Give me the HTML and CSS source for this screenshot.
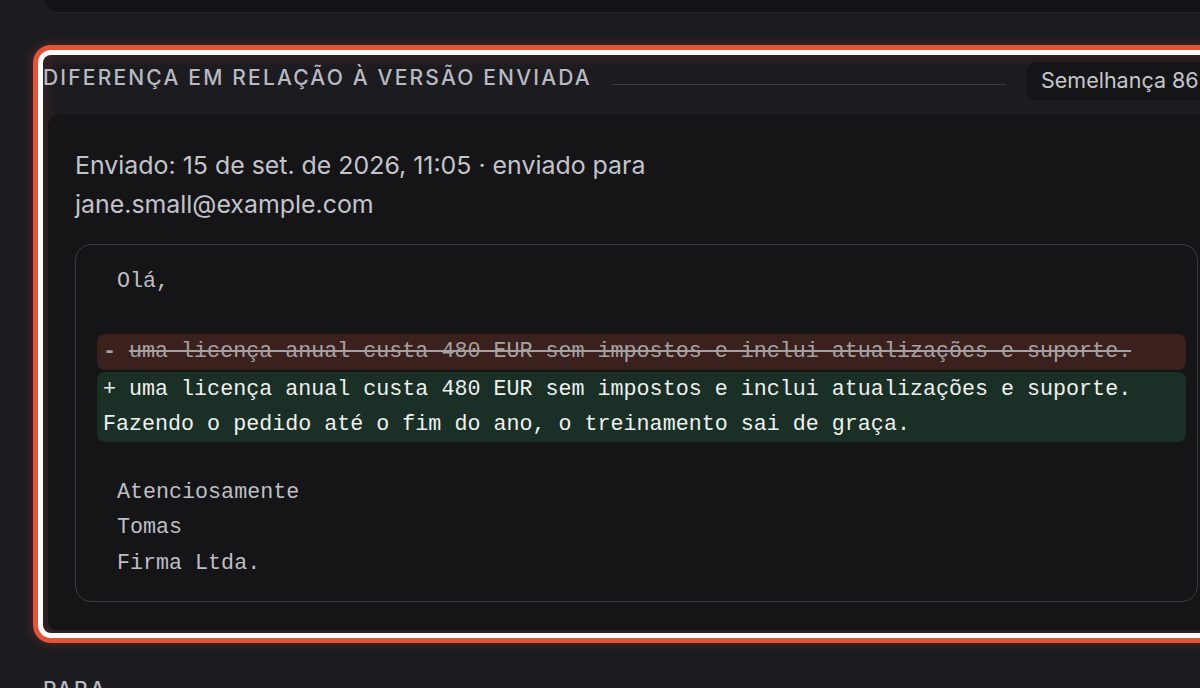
FILE: index.html
```html
<!DOCTYPE html>
<html lang="pt">
<head>
<meta charset="utf-8">
<title>Diferença</title>
<link rel="stylesheet" href="styles.css">
</head>
<body>
<div class="page">
  <div class="top-card"></div>
  <section class="diff-section">
    <header class="diff-head">
      <h2 class="diff-title">Diferença em relação à versão enviada</h2>
      <div class="rule"></div>
      <div class="badge">Semelhança 86%</div>
    </header>
    <div class="diff-card">
      <p class="meta">Enviado: 15 de set. de 2026, 11:05 · enviado para<br>jane.small@example.com</p>
      <div class="code">
        <div class="ln">Olá,</div>
        <div class="ln">&nbsp;</div>
        <div class="blk del"><span class="sign">-</span> <s>uma licença anual custa 480 EUR sem impostos e inclui atualizações e suporte.</s></div>
        <div class="blk ins">+ uma licença anual custa 480 EUR sem impostos e inclui atualizações e suporte.<br>Fazendo o pedido até o fim do ano, o treinamento sai de graça.</div>
        <div class="ln">&nbsp;</div>
        <div class="ln">Atenciosamente</div>
        <div class="ln">Tomas</div>
        <div class="ln">Firma Ltda.</div>
      </div>
    </div>
  </section>
  <h3 class="next-label">Para</h3>
</div>
</body>
</html>
```
FILE: styles.css
```css
html, body {
  margin: 0;
  padding: 0;
  background: #1c1c20;
  overflow: hidden;
  height: 688px;
}
.page {
  width: 1200px;
  padding-left: 43px;
  font-family: Inter, "Noto Sans", sans-serif;
  color: #c3c3ca;
}
.top-card {
  height: 12px;
  margin-left: 2px;
  background: #141417;
  border-radius: 0 0 0 12px;
  box-shadow: 0 1px 0 rgba(255,255,255,0.03);
}
.diff-section {
  margin-top: 43px;
  background: #1c1c20;
  border-radius: 8px;
  box-shadow:
    0 0 0 5px #ffffff,
    0 0 0 10px #e4523a,
    0 0 10px 11px rgba(228,82,58,0.25),
    inset 0 0 16px rgba(228,82,58,0.22);
  padding-bottom: 3px;
}
.diff-head {
  display: flex;
  align-items: center;
  height: 48px;
  padding-top: 5px;
}
.diff-title {
  margin: 0;
  font-size: 21px;
  font-weight: 500;
  text-transform: uppercase;
  letter-spacing: 2.18px;
  color: #b9b9c1;
  white-space: nowrap;
  position: relative;
  top: -7px;
}
.rule {
  flex: 1;
  height: 1px;
  background: #3a3a41;
  margin: 0 21px 0 21px;
}
.badge {
  flex: none;
  width: 216px;
  box-sizing: border-box;
  background: #151518;
  border-radius: 9px;
  padding: 5px 0 7px 14px;
  font-size: 21.5px;
  color: #c6c6cd;
  white-space: nowrap;
  overflow: visible;
  position: relative;
  top: -3px;
}
.diff-card {
  margin: 6px 0 0 5px;
  background: #151518;
  border-radius: 12px 0 0 8px;
  padding: 32px 0 28px 27px;
}
.meta {
  margin: 0 0 20px 0;
  font-size: 24.9px;
  line-height: 39px;
  color: #c3c3ca;
}
.code {
  width: 1121px;
  border: 1px solid #3a3a40;
  border-radius: 16px;
  padding: 19px 0 20px 0;
  font-family: "Liberation Mono", "DejaVu Sans Mono", monospace;
  font-size: 21.7px;
  line-height: 35.2px;
  color: #bfbfc3;
}
.ln {
  padding-left: 41px;
  white-space: pre;
}
.blk {
  margin: 0 11px 0 21px;
  padding-left: 6px;
  border-radius: 8px;
  white-space: pre;
}
.del {
  background: #3a211e;
  color: #a7a2a2;
}
.del .sign {
  font-weight: 700;
}
.del s {
  text-decoration-thickness: 2px;
}
.ins {
  margin-top: 2px;
  margin-bottom: -2px;
  background: #1a2f26;
  color: #eef1ef;
}
.next-label {
  margin: 44px 0 0 0;
  font-size: 21px;
  font-weight: 500;
  text-transform: uppercase;
  letter-spacing: 2.18px;
  color: #b9b9c1;
}
```
